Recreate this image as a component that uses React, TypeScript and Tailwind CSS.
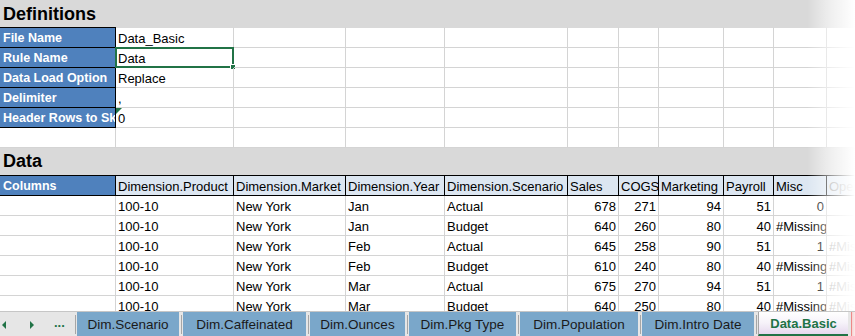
import React from "react";

const W = [116, 118, 112, 99, 123, 51, 40, 65, 50, 53, 160];
const GRID = "border-[#d4d4d4]";

type Cell = { t?: string; right?: boolean };

function Row({ cells, h = "h-[20px]" }: { cells: Cell[]; h?: string }) {
  return (
    <div className={`flex ${h} shrink-0`}>
      {W.map((w, i) => {
        const c = cells[i] || {};
        return (
          <div
            key={i}
            style={{ width: w }}
            className={`shrink-0 border-r border-b ${GRID} flex items-end overflow-hidden whitespace-nowrap leading-[15px] pb-[1px] ${
              c.right ? "justify-end pr-[2px]" : "pl-[2px]"
            } ${i === 10 ? "text-[#9a9a9a]" : ""}`}
          >
            {c.t}
          </div>
        );
      })}
    </div>
  );
}

const defs: [string, string][] = [
  ["File Name", "Data_Basic"],
  ["Rule Name", "Data"],
  ["Data Load Option", "Replace"],
  ["Delimiter", ","],
  ["Header Rows to Skip", "0"],
];

const headers = [
  "Dimension.Product",
  "Dimension.Market",
  "Dimension.Year",
  "Dimension.Scenario",
  "Sales",
  "COGS",
  "Marketing",
  "Payroll",
  "Misc",
  "Opening Inventory",
];

const data: string[][] = [
  ["100-10", "New York", "Jan", "Actual", "678", "271", "94", "51", "0", ""],
  ["100-10", "New York", "Jan", "Budget", "640", "260", "80", "40", "#Missing", ""],
  ["100-10", "New York", "Feb", "Actual", "645", "258", "90", "51", "1", "#Missing"],
  ["100-10", "New York", "Feb", "Budget", "610", "240", "80", "40", "#Missing", "#Missing"],
  ["100-10", "New York", "Mar", "Actual", "675", "270", "94", "51", "1", "#Missing"],
  ["100-10", "New York", "Mar", "Budget", "640", "250", "80", "40", "#Missing", "#Missing"],
];

const isNum = (s: string) => /^\d+$/.test(s);

const tabs = [
  { n: "Dim.Scenario", w: 102 },
  { n: "Dim.Caffeinated", w: 123 },
  { n: "Dim.Ounces", w: 95 },
  { n: "Dim.Pkg Type", w: 107 },
  { n: "Dim.Population", w: 118 },
  { n: "Dim.Intro Date", w: 112 },
];

function Sep() {
  return (
    <div className="w-[4px] h-full flex justify-center items-center shrink-0">
      <div className="w-[1px] h-[19px] bg-[#a6a6a6]" />
    </div>
  );
}

export default function App() {
  return (
    <div className="w-[855px] h-[336px] overflow-hidden bg-white relative font-['Liberation_Sans',Arial,sans-serif] text-[13px] text-black flex flex-col">
      <div className="relative flex-1 overflow-hidden flex flex-col">
        {/* Definitions band */}
        <div className="h-[27px] shrink-0 bg-[#d9d9d9] pl-[3px] pt-[3px] text-[18px] leading-[22px] font-bold">
          Definitions
        </div>
        {defs.map(([k, v], r) => (
          <div key={k} className={`flex shrink-0 ${r === 0 ? "h-[21px]" : "h-[20px]"}`}>
            {W.map((w, i) => {
              if (i === 0)
                return (
                  <div
                    key={i}
                    style={{ width: w }}
                    className={`shrink-0 bg-[#4f81bd] text-white font-bold border-r border-b border-black ${
                      r === 0 ? "border-t" : ""
                    } flex items-end overflow-hidden whitespace-nowrap leading-[15px] pb-[1px] pl-[3px] text-[12.5px]`}
                  >
                    {k}
                  </div>
                );
              return (
                <div
                  key={i}
                  style={{ width: w }}
                  className={`shrink-0 border-r border-b ${GRID} ${
                    r === 0 ? "border-t border-t-[#d9d9d9]" : ""
                  } relative flex items-end overflow-visible whitespace-nowrap leading-[15px] pb-[1px] pl-[2px]`}
                >
                  {i === 1 ? v : ""}
                  {i === 1 && r === 1 && (
                    <div className="absolute left-[-1px] top-[-1px] w-[119px] h-[21px] border-2 border-[#217346] pointer-events-none">
                      <div className="absolute right-[-4px] bottom-[-4px] w-[6px] h-[6px] bg-[#217346] border border-white" />
                    </div>
                  )}
                  {i === 1 && r === 4 && (
                    <div className="absolute left-0 top-0 w-0 h-0 border-t-[6px] border-t-[#217346] border-r-[6px] border-r-transparent" />
                  )}
                </div>
              );
            })}
          </div>
        ))}
        <Row cells={[]} />
        {/* Data band */}
        <div className="h-[27px] shrink-0 bg-[#d9d9d9] pl-[3px] pt-[2px] text-[18px] leading-[22px] font-bold">
          Data
        </div>
        <div className="flex h-[21px] shrink-0">
          {W.map((w, i) => (
            <div
              key={i}
              style={{ width: w }}
              className={`shrink-0 border border-l-0 border-black flex items-end overflow-hidden whitespace-nowrap leading-[15px] pb-[1px] ${
                i === 0
                  ? "bg-[#4f81bd] text-white font-bold pl-[3px] text-[12.5px]"
                  : i === 10
                  ? "bg-[#dce6f1] pl-[2px] text-[#8a8a8a] border-[#9a9a9a]"
                  : "bg-[#dce6f1] pl-[2px]"
              }`}
            >
              {i === 0 ? "Columns" : headers[i - 1]}
            </div>
          ))}
        </div>
        {data.map((row, r) => (
          <Row
            key={r}
            cells={[{}, ...row.map((t) => ({ t, right: isNum(t) }))]}
          />
        ))}
        {/* right fade */}
        <div className="absolute right-0 top-0 bottom-0 w-[48px] bg-gradient-to-r from-white/0 via-white/60 to-white pointer-events-none" />
      </div>

      {/* Sheet tabs */}
      <div className="h-[25px] shrink-0 bg-[#e6e6e6] border-t border-[#c6c6c6] flex items-stretch relative">
        <div className="w-[73px] shrink-0 flex items-center relative">
          <div className="absolute left-[2px] top-[9px] w-0 h-0 border-y-[4px] border-y-transparent border-r-[4px] border-r-[#217346]" />
          <div className="absolute left-[30px] top-[9px] w-0 h-0 border-y-[4px] border-y-transparent border-l-[4px] border-l-[#217346]" />
          <div className="absolute left-[54px] top-[3px] text-[#217346] font-bold text-[13px] leading-[15px]">...</div>
        </div>
        <Sep />
        {tabs.map((t) => (
          <React.Fragment key={t.n}>
            <div
              style={{ width: t.w }}
              className="shrink-0 bg-[#7aa7ca] flex items-center justify-center text-[13.5px] text-[#1a1a1a] leading-[15px] pt-[1px]"
            >
              {t.n}
            </div>
            <Sep />
          </React.Fragment>
        ))}
        <div className="w-[90px] shrink-0 bg-gradient-to-b from-white via-[#f6f2f9] to-[#e6d9ee] border-l border-[#a6a6a6] border-b-2 border-b-[#217346] flex items-center justify-center font-bold text-[#217346] text-[13px] leading-[15px]">
          Data.Basic
        </div>
        <div className="w-[3px] shrink-0" />
        <div className="flex-1 bg-gradient-to-r from-[#f6d2d2] to-[#fbeaea] border-l border-[#e88]" />
      </div>
    </div>
  );
}
